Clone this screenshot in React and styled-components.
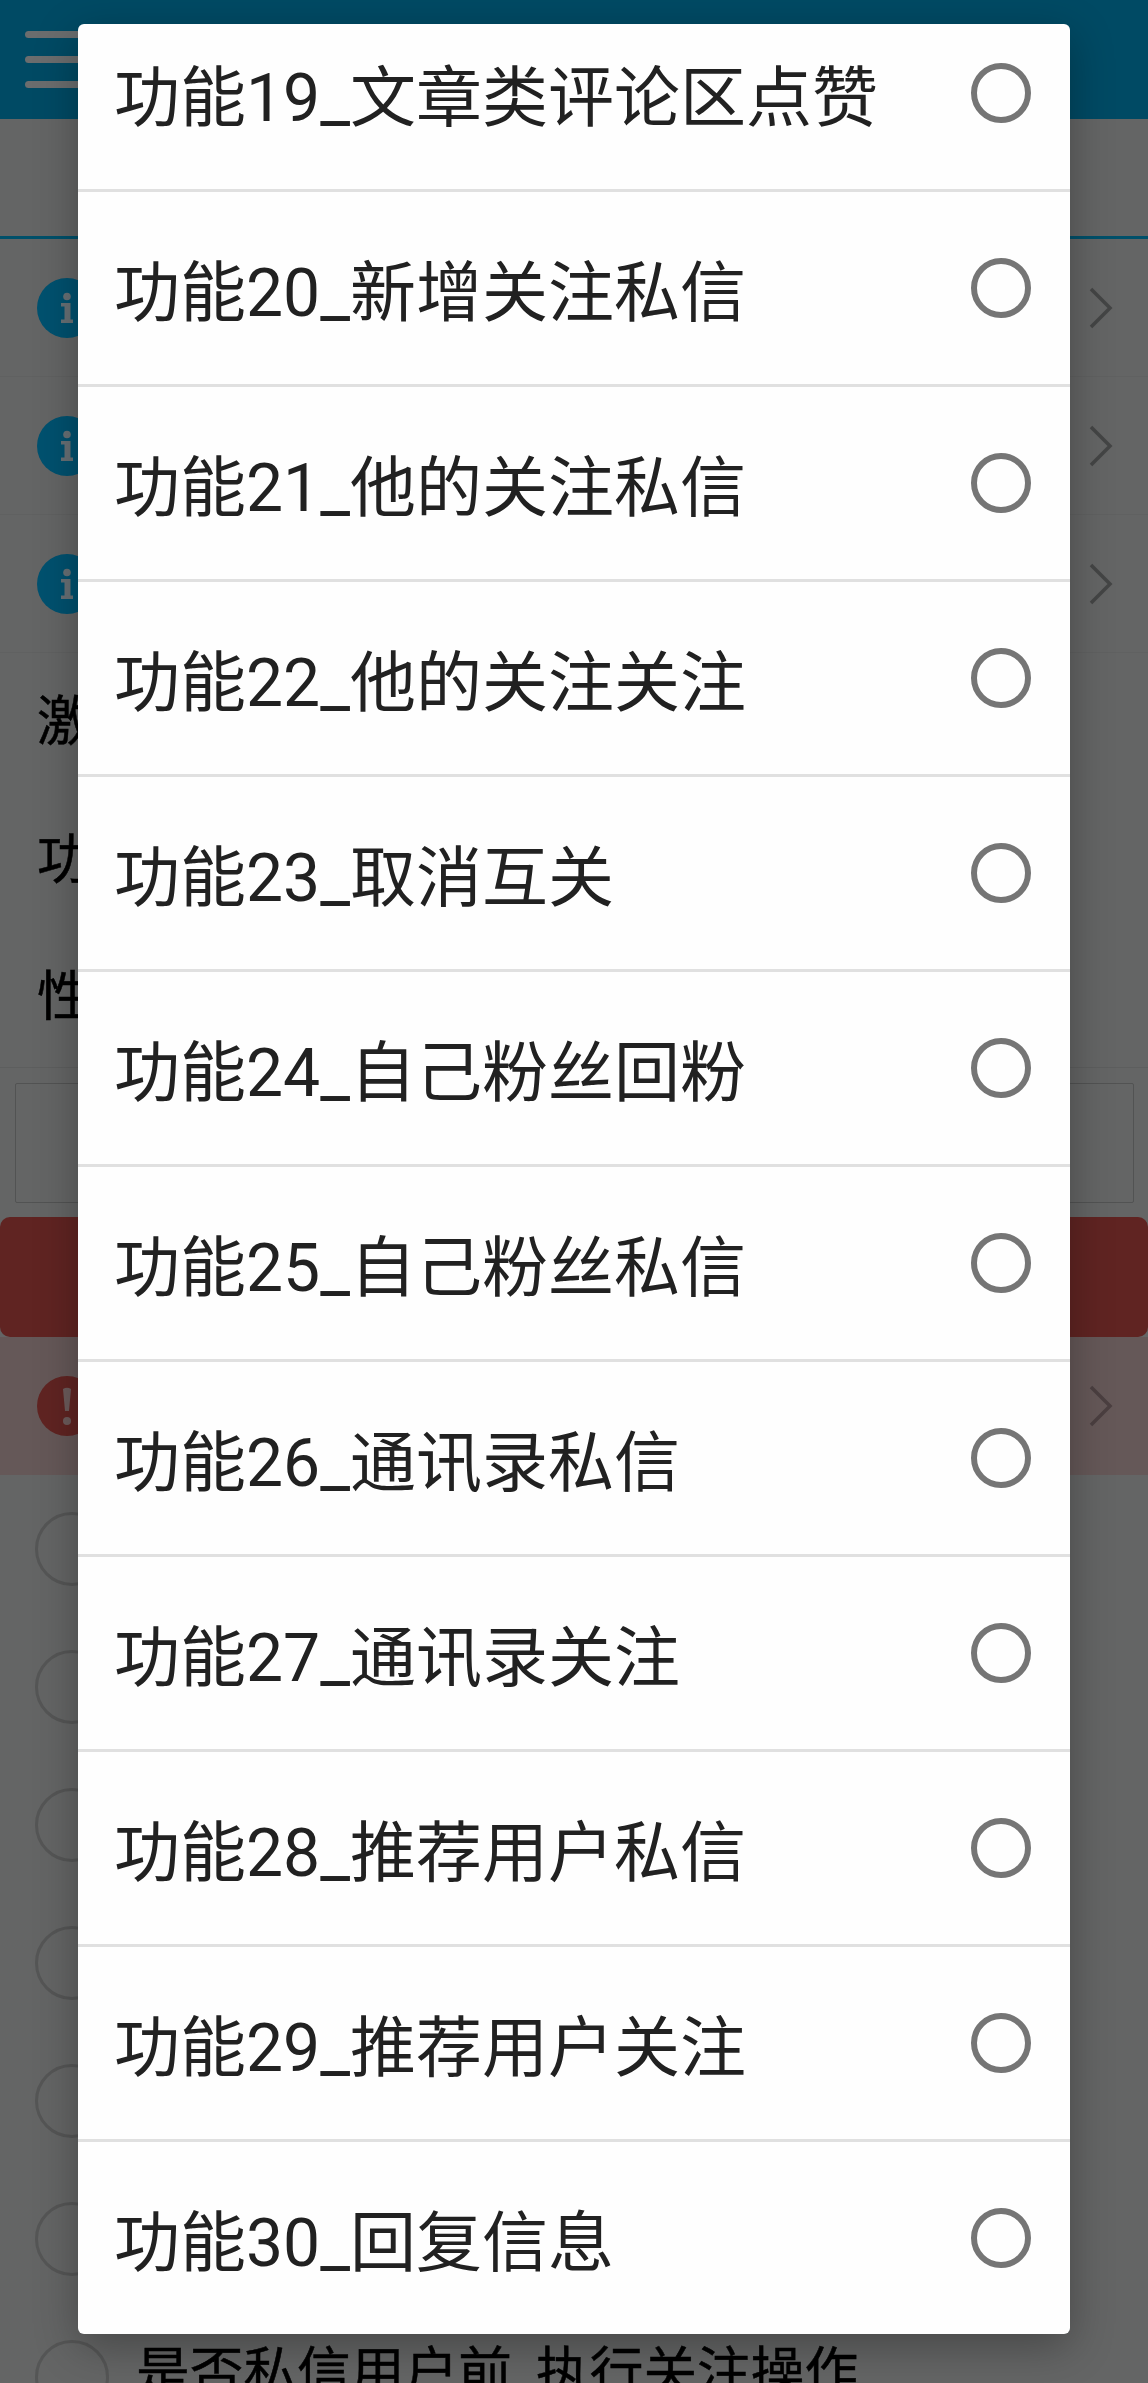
import styled, { createGlobalStyle } from 'styled-components'

const GlobalStyle = createGlobalStyle`
  body {
    margin: 0;
    font-family: Roboto, 'Noto Sans CJK SC', sans-serif;
  }
`

const Screen = styled.div`
  position: relative;
  block-size: 2383px;
  overflow: hidden;
  background: #646565;
  color: #000;
`

const Header = styled.header`
  display: flex;
  align-items: center;
  block-size: 119px;
  padding-inline: 25px;
  box-sizing: border-box;
  background: #004a64;
`

const MenuButton = styled.div`
  display: flex;
  flex-direction: column;
  gap: 18px;
  & > span {
    inline-size: 66px;
    block-size: 7px;
    border-radius: 4px;
    background: #6b6d6e;
  }
`

const TabBar = styled.div`
  block-size: 120px;
  box-sizing: border-box;
  border-block-end: 3px solid #00506a;
`

const Cell = styled.div`
  display: flex;
  align-items: center;
  justify-content: space-between;
  block-size: 138px;
  padding: 0 35px 0 36px;
  box-sizing: border-box;
  background: ${({ $danger }) => ($danger ? '#655858' : 'transparent')};
  border-block-end: ${({ $danger }) => ($danger ? '0' : '1px solid #606161')};
`

const FieldRow = styled.div`
  display: flex;
  align-items: center;
  block-size: 137.5px;
  padding: 3px 37px 0;
  box-sizing: border-box;
  font-size: 54px;
  line-height: 1;
  -webkit-text-stroke: 0.5px #000;
`

const InputArea = styled.div`
  margin-block-start: 1px;
  padding: 15px 14px 14px 15px;
  border-block-start: 1px solid #5d5e5e;
`

const Input = styled.div`
  block-size: 118px;
  border: 1px solid #525353;
  border-radius: 2px;
`

const DangerButton = styled.div`
  block-size: 120px;
  border-radius: 10px;
  background: #602422;
`

const SwitchList = styled.div`
  padding-block-start: 5px;
`

const SwitchRow = styled.div`
  display: flex;
  align-items: center;
  gap: 27px;
  block-size: 138px;
  padding-inline-start: 35px;
  font-size: 53.7px;
  line-height: 1;
  white-space: nowrap;
  -webkit-text-stroke: 0.5px #000;
  & > span {
    margin-block-end: 7px;
  }
`

const Knob = styled.div`
  inline-size: 74px;
  block-size: 74px;
  box-sizing: border-box;
  border: 3px solid #555656;
  border-radius: 50%;
`

const DialogLayer = styled.div`
  position: absolute;
  inset: 0;
  padding: 24px 78px 49px;
`

const Dialog = styled.div`
  display: flex;
  flex-direction: column;
  justify-content: flex-end;
  block-size: 2310px;
  overflow: hidden;
  border-radius: 6px;
  background: #fefefe;
  box-shadow: 0 12px 44px rgba(0, 0, 0, 0.3);
`

const Option = styled.div`
  display: flex;
  align-items: center;
  justify-content: space-between;
  flex: 0 0 192px;
  padding: 0 39px 0 36px;
  border-block-end: 3px solid #e0e0e0;
  &:last-child {
    border-block-end: 0;
  }
`

const OptionLabel = styled.span`
  padding-block-start: 11px;
  color: #212121;
  font-size: 66px;
  line-height: 78px;
  white-space: nowrap;
`

const Radio = styled.span`
  inline-size: 60px;
  block-size: 60px;
  box-sizing: border-box;
  border: 6px solid #757575;
  border-radius: 50%;
`

const options = [
  '功能19_文章类评论区点赞',
  '功能20_新增关注私信',
  '功能21_他的关注私信',
  '功能22_他的关注关注',
  '功能23_取消互关',
  '功能24_自己粉丝回粉',
  '功能25_自己粉丝私信',
  '功能26_通讯录私信',
  '功能27_通讯录关注',
  '功能28_推荐用户私信',
  '功能29_推荐用户关注',
  '功能30_回复信息'
]

const switches = ['', '', '', '', '', '', '是否私信用户前_执行关注操作']

const InfoIcon = () => (
  <svg width='62' height='62' viewBox='0 0 62 62'>
    <circle cx='31' cy='31' r='30' fill='#00516f' />
    <circle cx='31' cy='19.5' r='3.8' fill='#687075' />
    <path d='M25 26h9.500v16.500h2.500v3.500h-12v-3.500h3.500v-13h-3.500z' fill='#687075' />
  </svg>
)

const AlertIcon = () => (
  <svg width='62' height='62' viewBox='0 0 62 62'>
    <circle cx='31' cy='31' r='30' fill='#602422' />
    <path d='M27 14q4-2.500 8 0l-2 22h-4z' fill='#6c5b5b' />
    <circle cx='31' cy='46' r='4' fill='#6c5b5b' />
  </svg>
)

const Chevron = ({ color = '#444545' }) => (
  <svg width='26' height='44' viewBox='0 0 26 44' fill='none' stroke={color} strokeWidth='3.5'>
    <path d='M4 3L23 22L4 41' />
  </svg>
)

const App = () => {
  return (
    <Screen>
      <GlobalStyle />
      <Header>
        <MenuButton>
          <span />
          <span />
          <span />
        </MenuButton>
      </Header>
      <TabBar />
      <Cell>
        <InfoIcon />
        <Chevron />
      </Cell>
      <Cell>
        <InfoIcon />
        <Chevron />
      </Cell>
      <Cell>
        <InfoIcon />
        <Chevron />
      </Cell>
      <FieldRow>激</FieldRow>
      <FieldRow>功</FieldRow>
      <FieldRow>性</FieldRow>
      <InputArea>
        <Input />
      </InputArea>
      <DangerButton />
      <Cell $danger>
        <AlertIcon />
        <Chevron color='#4b3f40' />
      </Cell>
      <SwitchList>
        {switches.map((label, index) => (
          <SwitchRow key={index}>
            <Knob />
            <span>{label}</span>
          </SwitchRow>
        ))}
      </SwitchList>
      <DialogLayer>
        <Dialog>
          {options.map((label) => (
            <Option key={label}>
              <OptionLabel>{label}</OptionLabel>
              <Radio />
            </Option>
          ))}
        </Dialog>
      </DialogLayer>
    </Screen>
  )
}

export default App
